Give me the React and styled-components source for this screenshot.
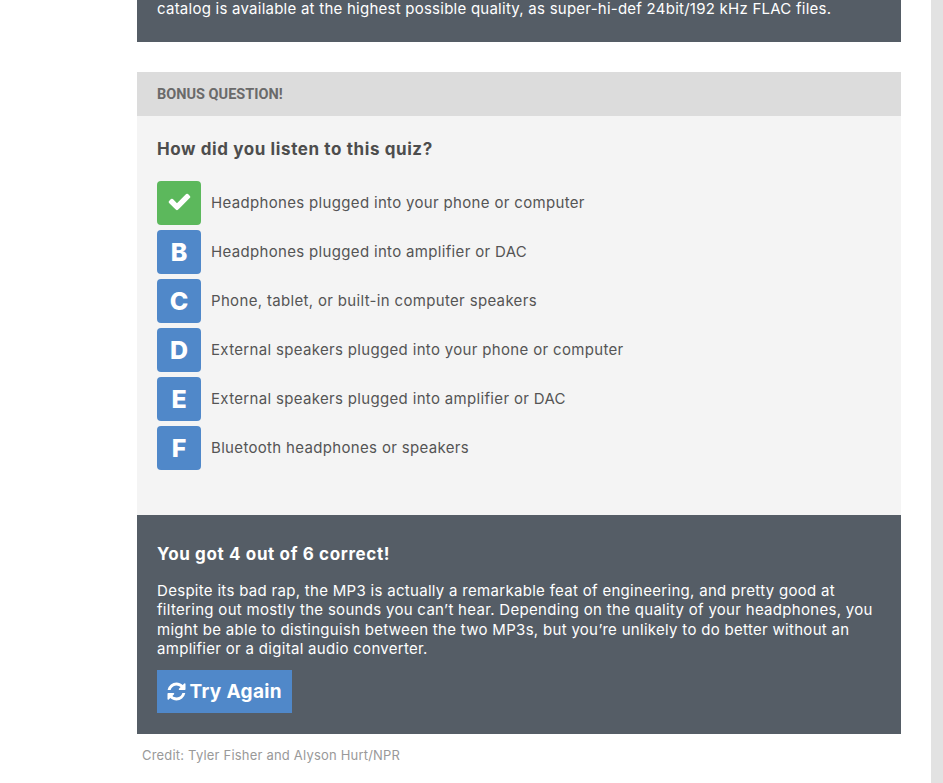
import React from "react";
import styled, { createGlobalStyle } from "styled-components";

const Global = createGlobalStyle`
  html, body { margin: 0; padding: 0; background: #fff; }
  body { font-family: Inter, "Liberation Sans", sans-serif; overflow: hidden; }
`;

const Page = styled.div`
  display: flex;
  width: 943px;
  height: 783px;
  overflow: hidden;
`;
const Column = styled.main`
  width: 764px;
  margin-left: 137px;
`;
const Track = styled.div`
  width: 12px;
  height: 783px;
  margin-left: 30px;
  background: #e2e2e2;
`;
const Intro = styled.section`
  height: 42px;
  padding: 0 20px;
  box-sizing: border-box;
  background: #555d66;
  color: #fff;
  font-size: 15px;
  line-height: 17px;
  letter-spacing: 0.245px;
  white-space: nowrap;
`;
const Quiz = styled.section`
  margin-top: 30px;
`;
const Kicker = styled.header`
  height: 44px;
  box-sizing: border-box;
  padding: 1px 20px 0;
  display: flex;
  align-items: center;
  background: #dcdcdc;
  color: #6a6a6a;
  font: 700 14.5px Roboto, sans-serif;
`;
const Body = styled.div`
  height: 399px;
  box-sizing: border-box;
  padding: 22px 20px 0;
  background: #f4f4f4;
`;
const Question = styled.h2`
  margin: 0 0 21px;
  height: 22px;
  font-size: 17px;
  line-height: 22px;
  font-weight: 700;
  letter-spacing: 0.6px;
  color: #4d4d4d;
`;
const Answers = styled.ul`
  list-style: none;
  margin: 0;
  padding: 0;
  display: flex;
  flex-direction: column;
  gap: 5px;
`;
const Answer = styled.li`
  display: flex;
  align-items: center;
  gap: 10px;
  height: 44px;
  font-size: 15px;
  letter-spacing: 0.33px;
  color: #555;
`;
const Label = styled.span`
  padding-bottom: 2px;
`;
const Badge = styled.span`
  width: 44px;
  height: 44px;
  border-radius: 4px;
  display: flex;
  align-items: center;
  justify-content: center;
  color: #fff;
  font-size: 25px;
  font-weight: 800;
  letter-spacing: 0;
  background: ${(p) => (p.$correct ? "#5cb85c" : "#5088c9")};
`;
const Result = styled.section`
  height: 219px;
  box-sizing: border-box;
  padding: 29px 20px 0;
  background: #555d66;
  color: #fff;
`;
const Score = styled.h3`
  margin: 0 0 17px;
  font-size: 17px;
  line-height: 20px;
  font-weight: 700;
  letter-spacing: 0.63px;
`;
const Summary = styled.p`
  margin: 0 0 12px;
  font-size: 15px;
  line-height: 19.33px;
  letter-spacing: 0.3px;
  width: 724px;
`;
const Retry = styled.button`
  display: inline-flex;
  align-items: center;
  gap: 3px;
  height: 43px;
  width: 135px;
  padding: 0 0 0 8.5px;
  border: 0;
  background: #5088c9;
  color: #fff;
  font: 700 19px Inter, sans-serif;
  letter-spacing: 0.35px;
  white-space: nowrap;
`;
const Credit = styled.p`
  margin: 13px 0 0 5px;
  font-size: 13px;
  line-height: 16px;
  letter-spacing: 0.2px;
  color: #999;
`;
const CheckGlyph = styled.svg`
  width: 25px;
  height: 25px;
  margin-bottom: 3px;
  fill: currentColor;
`;
const RefreshGlyph = styled.svg`
  width: 21px;
  height: 21px;
  fill: currentColor;
`;

const CheckIcon = () => (
  <CheckGlyph viewBox="0 0 1792 1792" aria-hidden="true">
    <path d="M1671 566q0 40-28 68l-724 724-136 136q-28 28-68 28t-68-28l-136-136-362-362q-28-28-28-68t28-68l136-136q28-28 68-28t68 28l294 295 656-657q28-28 68-28t68 28l136 136q28 28 28 68z" />
  </CheckGlyph>
);
const RefreshIcon = () => (
  <RefreshGlyph viewBox="0 0 1792 1792" aria-hidden="true">
    <path d="M1639 1056q0 5-1 7-64 268-268 434.5t-478 166.5q-146 0-282.5-55t-243.5-157l-129 129q-19 19-45 19t-45-19-19-45v-448q0-26 19-45t45-19h448q26 0 45 19t19 45-19 45l-137 137q71 66 161 102t187 36q134 0 250-65t186-179q11-17 53-117 8-23 30-23h192q13 0 22.5 9.5t9.5 22.5zm25-800v448q0 26-19 45t-45 19h-448q-26 0-45-19t-19-45 19-45l138-138q-148-137-349-137-134 0-250 65t-186 179q-11 17-53 117-8 23-30 23h-199q-13 0-22.5-9.5t-9.5-22.5v-7q65-268 270-434.5t480-166.5q146 0 284 55.5t245 156.5l130-129q19-19 45-19t45 19 19 45z" />
  </RefreshGlyph>
);

const answers = [
  ["check", "Headphones plugged into your phone or computer"],
  ["B", "Headphones plugged into amplifier or DAC"],
  ["C", "Phone, tablet, or built-in computer speakers"],
  ["D", "External speakers plugged into your phone or computer"],
  ["E", "External speakers plugged into amplifier or DAC"],
  ["F", "Bluetooth headphones or speakers"],
];

export default function App() {
  return (
    <Page>
      <Global />
      <Column>
        <Intro>catalog is available at the highest possible quality, as super-hi-def 24bit/192 kHz FLAC files.</Intro>
        <Quiz>
          <Kicker>BONUS QUESTION!</Kicker>
          <Body>
            <Question>How did you listen to this quiz?</Question>
            <Answers>
              {answers.map(([k, t]) => (
                <Answer key={k}>
                  <Badge $correct={k === "check"}>{k === "check" ? <CheckIcon /> : k}</Badge>
                  <Label>{t}</Label>
                </Answer>
              ))}
            </Answers>
          </Body>
          <Result>
            <Score>You got 4 out of 6 correct!</Score>
            <Summary>
              Despite its bad rap, the MP3 is actually a remarkable feat of engineering, and pretty good at filtering out mostly the sounds you can’t hear. Depending on the quality of your headphones, you might be able to distinguish between the two MP3s, but you’re unlikely to do better without an amplifier or a digital audio converter.
            </Summary>
            <Retry><RefreshIcon /> Try Again</Retry>
          </Result>
        </Quiz>
        <Credit>Credit: Tyler Fisher and Alyson Hurt/NPR</Credit>
      </Column>
      <Track />
    </Page>
  );
}
